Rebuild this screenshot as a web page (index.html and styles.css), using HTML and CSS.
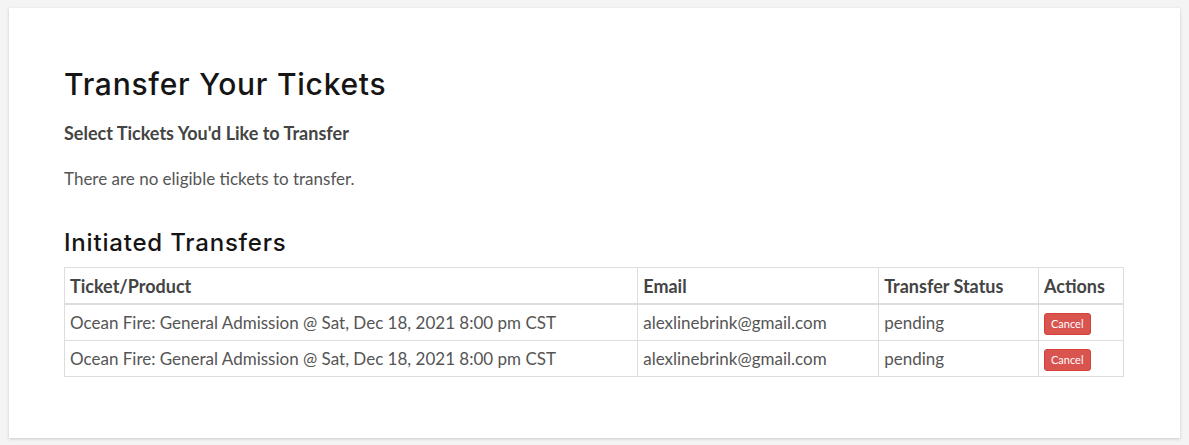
FILE: index.html
```html
<!DOCTYPE html>
<html>
<head>
<meta charset="utf-8">
<link rel="stylesheet" href="styles.css">
</head>
<body>
<div class="card">
  <h1 class="title">Transfer Your Tickets</h1>
  <h4 class="subtitle">Select Tickets You'd Like to Transfer</h4>
  <p class="empty">There are no eligible tickets to transfer.</p>
  <h2 class="section">Initiated Transfers</h2>
  <table class="transfers">
    <colgroup>
      <col class="c1"><col class="c2"><col class="c3"><col class="c4">
    </colgroup>
    <thead>
      <tr><th>Ticket/Product</th><th>Email</th><th>Transfer Status</th><th>Actions</th></tr>
    </thead>
    <tbody>
      <tr><td>Ocean Fire: General Admission @ Sat, Dec 18, 2021 8:00 pm CST</td><td>alexlinebrink@gmail.com</td><td>pending</td><td><button class="btn-cancel">Cancel</button></td></tr>
      <tr><td>Ocean Fire: General Admission @ Sat, Dec 18, 2021 8:00 pm CST</td><td>alexlinebrink@gmail.com</td><td>pending</td><td><button class="btn-cancel">Cancel</button></td></tr>
    </tbody>
  </table>
</div>
</body>
</html>
```
FILE: styles.css
```css
html, body {
  margin: 0;
  padding: 0;
  background: #f4f4f4;
}
body {
  padding: 8px 9px;
  font-family: Lato, "Liberation Sans", sans-serif;
  color: #555;
}
.card {
  width: 1171px;
  height: 430px;
  box-sizing: border-box;
  background: #fff;
  box-shadow: 0 1px 3px rgba(0,0,0,0.18);
  padding: 58px 55px 0 55px;
}
.title {
  font-family: Inter, sans-serif;
  font-weight: 500;
  font-size: 30px;
  line-height: 36px;
  letter-spacing: 0.75px;
  color: #151515;
  margin: 0 0 20px;
}
.subtitle {
  font-size: 18px;
  font-weight: 700;
  color: #444;
  margin: 0 0 24px;
  line-height: 22px;
}
.empty {
  font-size: 17px;
  line-height: 22px;
  margin: 0 0 39px;
}
.section {
  font-family: Inter, sans-serif;
  font-weight: 500;
  font-size: 24px;
  line-height: 28px;
  letter-spacing: 0.8px;
  color: #151515;
  margin: 0 0 10px;
}
.transfers {
  width: 1060px;
  border-collapse: collapse;
  font-size: 17px;
}
.c1 { width: 574px; }
.c2 { width: 241px; }
.c3 { width: 160px; }
.c4 { width: 85px; }
.transfers th, .transfers td {
  border: 1px solid #ddd;
  text-align: left;
  padding: 0 5px;
  height: 35px;
  vertical-align: middle;
}
.transfers th {
  font-size: 18px;
  font-weight: 700;
  color: #444;
  border-bottom: 2px solid #ddd;
}
.btn-cancel {
  background: #d9534f;
  color: #fff;
  border: 1px solid #d43f3a;
  border-radius: 3px;
  font-family: Lato, "Liberation Sans", sans-serif;
  font-size: 11px;
  padding: 3px 6px;
  line-height: 14px;
}
```
